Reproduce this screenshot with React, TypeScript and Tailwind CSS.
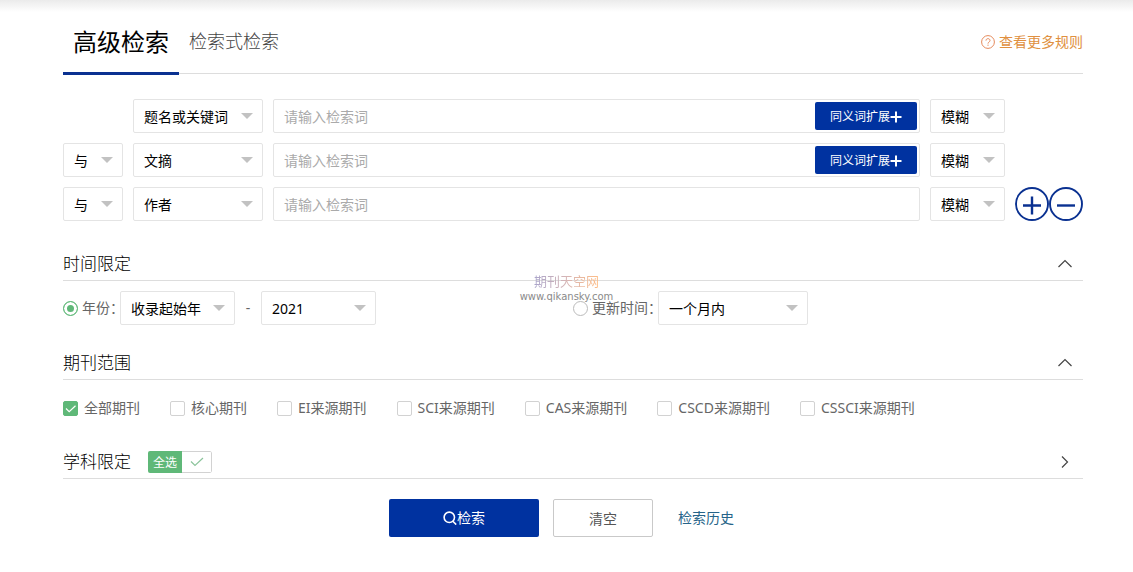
import React, { useState } from 'react';

const BLUE_BUTTON = 'bg-[#0032a0] text-white rounded-xs cursor-pointer';

interface SelectBoxProps {
  label: string;
  options: string[];
  className: string;
}

const SelectBox: React.FC<SelectBoxProps> = ({ label, options, className }) => {
  return (
    <div className={`relative shrink-0 ${className}`}>
      <select
        aria-label={label}
        className="block w-full h-[34px] pt-0.5 pl-[10px] pr-6 appearance-none border border-[#e4e4e4] rounded-xs bg-white text-sm text-black focus:outline-none"
      >
        {options.map((option) => (
          <option key={option}>{option}</option>
        ))}
      </select>
      <svg
        className="absolute right-[10px] top-[14px] w-3 h-1.5 pointer-events-none"
        viewBox="0 0 12 6"
        fill="#c2c2c2"
      >
        <path d="M0 0h12L6 6z" />
      </svg>
    </div>
  );
};

const ROWS = [
  { field: '题名或关键词', logic: false, synonym: true },
  { field: '文摘', logic: true, synonym: true },
  { field: '作者', logic: true, synonym: false },
];

const FIELDS = ['题名或关键词', '文摘', '作者'];

const SearchRow: React.FC<{ index: number }> = ({ index }) => {
  const row = ROWS[index];
  const isLast = index === ROWS.length - 1;

  return (
    <div className="flex items-center gap-[10px]">
      {row.logic ? (
        <SelectBox label="逻辑" options={['与', '或', '非']} className="w-[60px]" />
      ) : (
        <div className="w-[60px] shrink-0" />
      )}
      <SelectBox
        label="检索字段"
        options={[row.field, ...FIELDS.filter((f) => f !== row.field)]}
        className="w-[130px]"
      />
      <div className="flex flex-1 min-w-0 items-center h-[34px] pr-0.5 border border-[#e4e4e4] rounded-xs">
        <input
          type="text"
          aria-label="检索词"
          placeholder="请输入检索词"
          className="flex-1 min-w-0 h-8 pl-[10px] text-sm placeholder:text-[#aaa] focus:outline-none"
        />
        {row.synonym && (
          <button
            type="button"
            className={`flex items-center justify-center w-[102px] h-7 pt-0.5 text-xs ${BLUE_BUTTON}`}
          >
            同义词扩展
            <svg className="w-3 h-3" viewBox="0 0 12 12" stroke="currentColor" strokeWidth="2">
              <path d="M6 0.5v11M0.5 6h11" />
            </svg>
          </button>
        )}
      </div>
      <SelectBox label="匹配方式" options={['模糊', '精确']} className="w-[75px]" />
      <div className="flex w-[68px] shrink-0">
        {isLast && (
          <>
            <button type="button" aria-label="添加一行" className="cursor-pointer">
              <svg className="w-[34px] h-[34px]" viewBox="0 0 34 34" fill="none" stroke="#0a3191">
                <circle cx="17" cy="17" r="16" strokeWidth="1.9" />
                <path d="M8 18.5h18M17 9.5v18" strokeWidth="2.4" />
              </svg>
            </button>
            <button type="button" aria-label="删除一行" className="cursor-pointer">
              <svg className="w-[34px] h-[34px]" viewBox="0 0 34 34" fill="none" stroke="#0a3191">
                <circle cx="17" cy="17" r="16" strokeWidth="1.9" />
                <path d="M8 18.5h18" strokeWidth="2.4" />
              </svg>
            </button>
          </>
        )}
      </div>
    </div>
  );
};

interface SectionHeaderProps {
  title: string;
  open: boolean;
  children?: React.ReactNode;
}

const SectionHeader: React.FC<SectionHeaderProps> = ({ title, open, children }) => {
  return (
    <div className="flex items-center h-[34px] pr-[10px] border-b border-[#ddd]">
      <h2 className="text-[17px] font-light text-black">{title}</h2>
      {children}
      <button type="button" aria-label={title} aria-expanded={open} className="ml-auto cursor-pointer">
        <svg className="w-4 h-4" viewBox="0 0 16 16" fill="none" stroke="#444" strokeWidth="1.2">
          <path d={open ? 'M1.5 11L8 4.5 14.5 11' : 'M5 2.5l5.5 5.5L5 13.5'} />
        </svg>
      </button>
    </div>
  );
};

const JOURNALS = [
  '全部期刊',
  '核心期刊',
  'EI来源期刊',
  'SCI来源期刊',
  'CAS来源期刊',
  'CSCD来源期刊',
  'CSSCI来源期刊',
];

const RADIO =
  'w-[15px] h-[15px] mr-1 appearance-none rounded-full border border-[#bbb] bg-white checked:border-[#5fb878] checked:bg-[#5fb878] checked:shadow-[inset_0_0_0_3px_white]';

const App: React.FC = () => {
  const [range, setRange] = useState('year');
  const [journals, setJournals] = useState<string[]>(['全部期刊']);
  const [allSubjects, setAllSubjects] = useState(true);

  const toggleJournal = (name: string) => {
    setJournals((prev) =>
      prev.includes(name) ? prev.filter((item) => item !== name) : [...prev, name]
    );
  };

  return (
    <div className="relative bg-white pb-9 font-['Noto_Sans','Noto_Sans_CJK_SC',sans-serif]">
      <div className="h-3 bg-linear-to-b from-[#ebebeb] to-white" />

      <form className="pl-[63px] pr-[50px]" onSubmit={(e) => e.preventDefault()}>
        <div className="flex items-end h-[62px] border-b border-[#ddd]">
          <button
            type="button"
            className="-mb-0.5 h-[62px] w-[116px] pb-0.5 border-b-3 border-[#0a3191] text-2xl text-black cursor-pointer"
          >
            高级检索
          </button>
          <button type="button" className="h-[62px] px-[10px] pb-0.5 text-lg font-light text-[#444] cursor-pointer">
            检索式检索
          </button>
          <a href="#rules" className="ml-auto flex items-center h-[62px] gap-1 text-sm text-[#e09040]">
            <svg className="w-[14px] h-[14px]" viewBox="0 0 14 14" fill="none" stroke="#e58a5b">
              <circle cx="7" cy="7" r="6.4" />
              <path d="M5 5.6c0-2.6 4-2.6 4 0 0 1.4-2 1.4-2 3" />
              <path d="M7 9.6v1.2" />
            </svg>
            查看更多规则
          </a>
        </div>

        <div className="flex flex-col gap-[10px] pt-[25px] pb-[26px]">
          {ROWS.map((row, index) => (
            <SearchRow key={row.field} index={index} />
          ))}
        </div>

        <SectionHeader title="时间限定" open />
        <div className="grid grid-cols-2 pt-[10px] pb-[21px] text-sm text-[#666]">
          <div className="flex items-center">
            <label className="flex items-center">
              <input
                type="radio"
                name="range"
                className={RADIO}
                checked={range === 'year'}
                onChange={() => setRange('year')}
              />
              年份：
            </label>
            <SelectBox label="起始年" options={['收录起始年', '2020', '2019']} className="-ml-1 w-[115px]" />
            <span className="w-[26px] text-center">-</span>
            <SelectBox label="结束年" options={['2021', '2020', '2019']} className="w-[115px]" />
          </div>
          <div className="flex items-center">
            <label className="flex items-center">
              <input
                type="radio"
                name="range"
                className={RADIO}
                checked={range === 'update'}
                onChange={() => setRange('update')}
              />
              更新时间：
            </label>
            <SelectBox label="更新时间" options={['一个月内', '三个月内', '半年内']} className="-ml-1 w-[150px]" />
          </div>
        </div>

        <SectionHeader title="期刊范围" open />
        <div className="flex flex-wrap items-center gap-x-[30px] pt-[18px] pb-[27px]">
          {JOURNALS.map((name) => (
            <label key={name} className="relative flex items-center gap-1.5 text-sm leading-5 text-[#666]">
              <input
                type="checkbox"
                className="peer w-[15px] h-[15px] appearance-none border border-[#d2d2d2] rounded-xs bg-white checked:border-[#5fb878] checked:bg-[#5fb878]"
                checked={journals.includes(name)}
                onChange={() => toggleJournal(name)}
              />
              <svg
                className="absolute left-0 w-[15px] h-[15px] pointer-events-none opacity-0 peer-checked:opacity-100"
                viewBox="0 0 15 15"
                fill="none"
                stroke="white"
                strokeWidth="1.2"
              >
                <path d="M3 7.5l3.2 3.2L12.5 4.8" />
              </svg>
              {name}
            </label>
          ))}
        </div>

        <SectionHeader title="学科限定" open={false}>
          <label className="flex ml-[17px] h-[22px] rounded-xs overflow-hidden text-xs cursor-pointer">
            <input
              type="checkbox"
              className="sr-only"
              checked={allSubjects}
              onChange={() => setAllSubjects(!allSubjects)}
            />
            <span className="flex items-center justify-center w-[34px] pt-0.5 bg-[#5fb878] text-white">全选</span>
            <span className="flex items-center justify-center w-[30px] border border-l-0 border-[#d2d2d2] rounded-r-xs">
              {allSubjects && (
                <svg className="w-[14px] h-[14px]" viewBox="0 0 14 14" fill="none" stroke="#8cc49c" strokeWidth="1.2">
                  <path d="M1 6.5l4 4 8-7.5" />
                </svg>
              )}
            </span>
          </label>
        </SectionHeader>

        <div className="flex items-center justify-center pt-5 text-sm">
          <button type="submit" className={`flex items-center justify-center w-[150px] h-[38px] ${BLUE_BUTTON}`}>
            <svg className="w-[14px] h-[14px]" viewBox="0 0 14 14" fill="none" stroke="currentColor" strokeWidth="1.6">
              <circle cx="6.3" cy="6.3" r="5.2" />
              <path d="M9.6 10l3.6 3.6" />
            </svg>
            检索
          </button>
          <button
            type="reset"
            className="ml-[14px] w-[100px] h-[38px] pt-0.5 border border-[#c9c9c9] rounded-xs text-[#555] cursor-pointer"
          >
            清空
          </button>
          <a href="#history" className="ml-[25px] mr-[23px] text-[#266489]">
            检索历史
          </a>
        </div>
      </form>

      <div className="absolute inset-x-0 top-[272px] flex flex-col items-center pointer-events-none">
        <span className="bg-linear-to-r from-[#aaa5cb] via-[#d6b5b5] to-[#ffbd85] bg-clip-text text-[13px] leading-[18px] text-transparent">
          期刊天空网
        </span>
        <span className="text-[10px] leading-[14px] text-[#8a8a8a] font-['DejaVu_Sans',sans-serif]">
          www.qikansky.com
        </span>
      </div>
    </div>
  );
};

export default App;
